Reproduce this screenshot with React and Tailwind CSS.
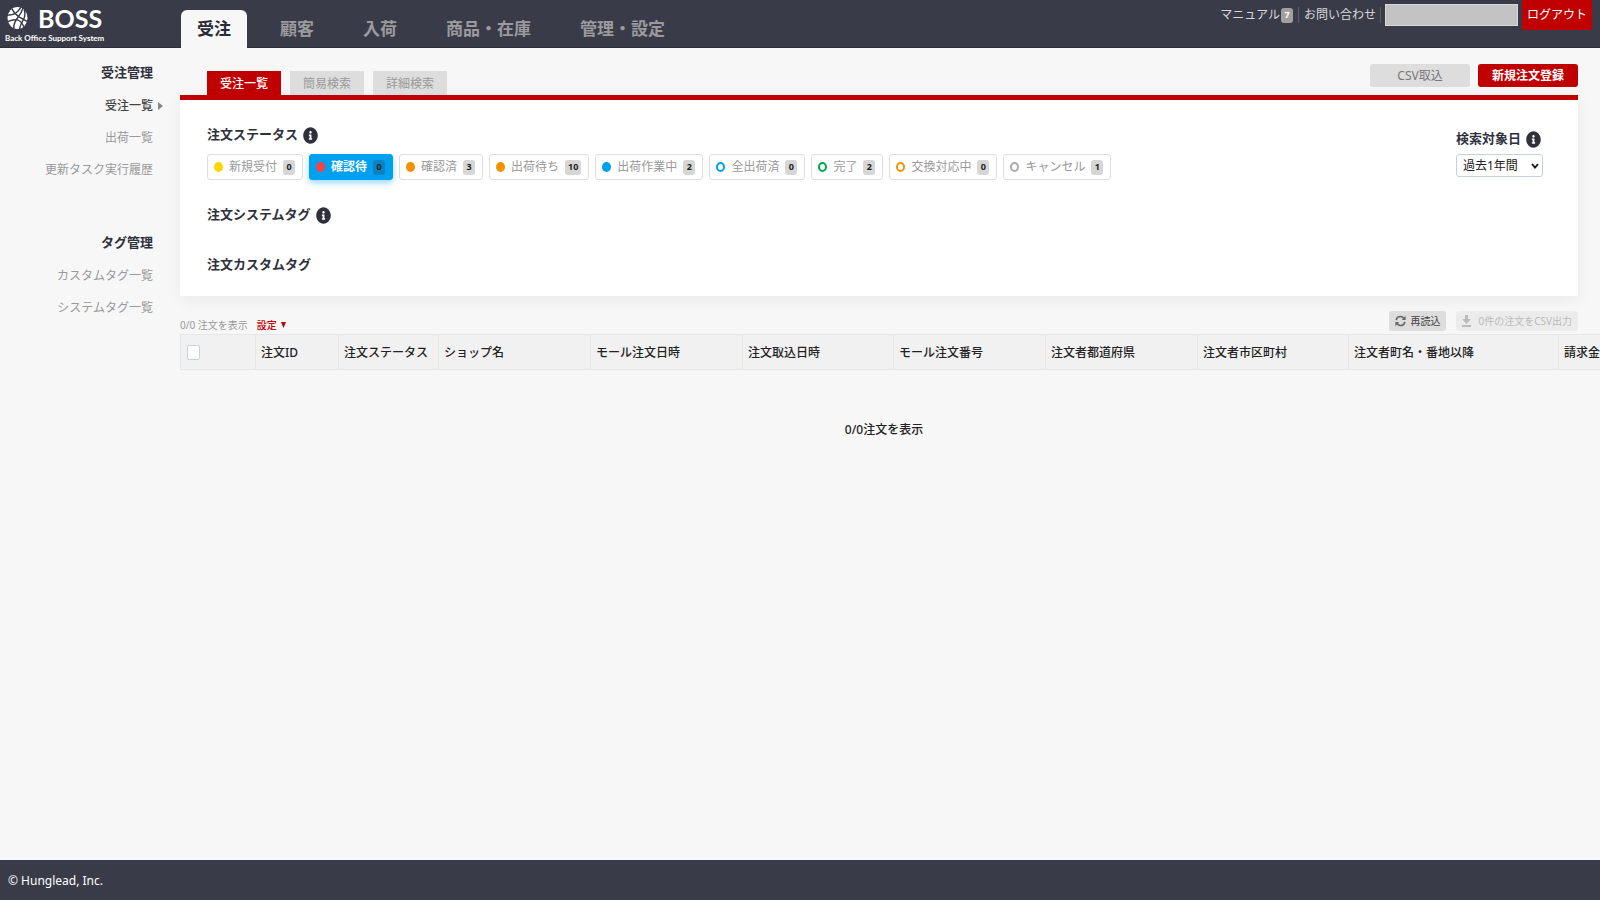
import clsx from "clsx";
import { FaInfoCircle } from "react-icons/fa";

const navItems = ["受注", "顧客", "入荷", "商品・在庫", "管理・設定"];

const sideMenus = [
  { title: "受注管理", items: ["受注一覧", "出荷一覧", "更新タスク実行履歴"] },
  { title: "タグ管理", items: ["カスタムタグ一覧", "システムタグ一覧"] },
];

const tabs = ["受注一覧", "簡易検索", "詳細検索"];

const statuses = [
  { label: "新規受付", count: 0, dot: "bg-[#ffd500]" },
  { label: "確認待", count: 0, dot: "bg-[#ff4040]", active: true },
  { label: "確認済", count: 3, dot: "bg-[#f59000]" },
  { label: "出荷待ち", count: 10, dot: "bg-[#f59000]" },
  { label: "出荷作業中", count: 2, dot: "bg-[#00a0f0]" },
  { label: "全出荷済", count: 0, dot: "border-2 border-[#00a0f0]" },
  { label: "完了", count: 2, dot: "border-2 border-[#00a84a]" },
  { label: "交換対応中", count: 0, dot: "border-2 border-[#f59000]" },
  { label: "キャンセル", count: 1, dot: "border-2 border-[#aaaaaa]" },
];

const columns = [
  { label: "注文ID", width: "w-[83px]" },
  { label: "注文ステータス", width: "w-[100px]" },
  { label: "ショップ名", width: "w-[152px]" },
  { label: "モール注文日時", width: "w-[152px]" },
  { label: "注文取込日時", width: "w-[151px]" },
  { label: "モール注文番号", width: "w-[152px]" },
  { label: "注文者都道府県", width: "w-[152px]" },
  { label: "注文者市区町村", width: "w-[151px]" },
  { label: "注文者町名・番地以降", width: "w-[210px]" },
  { label: "請求金", width: "w-[100px]" },
];

function Logo() {
  return (
    <a href="#" className="block w-[180px] pl-[5px] pt-1 text-white font-['Lato','Noto_Sans',sans-serif]">
      <span className="flex h-7 items-center gap-2.5">
        <svg viewBox="0 0 22 24" className="ml-0.5 h-6 w-[21px]" aria-hidden="true">
          <ellipse cx="11" cy="12" rx="10.5" ry="11.5" fill="#fff" />
          <g fill="none" stroke="#393c48" strokeWidth="1.5">
            <path d="M5 2 Q8 8 13 11 T22 16" />
            <path d="M17 1 Q15 7 11 12 T7 23" />
            <path d="M0 9 Q6 9 9 7 T15 0" />
            <path d="M0 16 Q7 13 11 14 T18 22" />
            <path d="M18 3 Q20 9 17 14 T13 24" />
          </g>
        </svg>
        <span className="text-[25px] leading-7 font-bold">BOSS</span>
      </span>
      <span className="block text-[8px] leading-3 font-bold whitespace-nowrap">Back Office Support System</span>
    </a>
  );
}

function Header() {
  return (
    <header className="flex h-12 border-b border-[#2c2d3a] bg-[#393c48]">
      <Logo />
      <nav className="ml-px flex gap-[17px] pt-2.5">
        {navItems.map((item, i) => (
          <a
            key={item}
            href="#"
            className={clsx(
              "flex h-[38px] items-center px-4 text-[17px] font-bold",
              i === 0 ? "rounded-t-md bg-[#f7f7f7] text-[#2b2c38]" : "text-[#9a9a9f]"
            )}
          >
            {item}
          </a>
        ))}
      </nav>
      <div className="ml-auto flex h-[30px] items-center pr-2 text-xs text-[#d8d8dc]">
        <a href="#" className="flex items-center gap-px">
          マニュアル
          <span className="flex h-[15px] w-3 items-center justify-center rounded-[3px] bg-[#a0a0a0] text-[9px] font-bold text-white">7</span>
        </a>
        <span className="mx-[5px] h-4 w-px bg-[#5c5d68]" />
        <a href="#">お問い合わせ</a>
        <span className="mx-1 h-4 w-px bg-[#5c5d68]" />
        <span className="h-[22px] w-[133px] border border-[#d8d8d8] bg-[#c3c3c3]" />
        <button className="ml-1 h-[30px] w-[70px] bg-[#c00000] text-white">ログアウト</button>
      </div>
    </header>
  );
}

function Sidebar() {
  return (
    <aside className="w-[180px] shrink-0 pt-2 pr-[27px] text-right">
      {sideMenus.map((menu, i) => (
        <section key={menu.title} className="mb-10">
          <h2 className="text-[13px] leading-8 font-bold text-[#2f303c]">{menu.title}</h2>
          <ul className="mt-0.5">
            {menu.items.map((item, j) => (
              <li key={item} className="relative text-xs leading-8">
                <a href="#" className={i === 0 && j === 0 ? "font-medium text-[#444]" : "text-[#999]"}>
                  {item}
                </a>
                {i === 0 && j === 0 && (
                  <svg viewBox="0 0 5 8" className="absolute top-3 -right-2.5 h-2 w-[5px]" aria-hidden="true">
                    <path d="M0 0 L5 4 L0 8 Z" fill="#888" />
                  </svg>
                )}
              </li>
            ))}
          </ul>
        </section>
      ))}
    </aside>
  );
}

function SectionTitle({ children, info }) {
  return (
    <h3 className="flex h-5 items-center gap-[5px] text-[13px] font-bold text-[#2f303c]">
      {children}
      {info && <FaInfoCircle className="h-[17px] w-[15px]" preserveAspectRatio="none" />}
    </h3>
  );
}

function StatusChip({ label, count, dot, active }) {
  return (
    <button
      className={clsx(
        "flex h-[26px] items-center rounded-[3px] border pr-[7px] pl-1.5 text-xs",
        active
          ? "border-[#00a0f0] bg-[#00a0f0] font-bold text-white shadow-[0_3px_6px_rgba(0,160,240,0.4)]"
          : "border-[#dddddd] bg-white text-[#999]"
      )}
    >
      <span className={clsx("h-2.5 w-[9px] rounded-[50%]", dot)} />
      <span className="ml-1.5">{label}</span>
      <span
        className={clsx(
          "ml-1.5 flex h-[15px] min-w-3 items-center justify-center rounded-[3px] px-[3px] text-[9px] font-bold text-[#222]",
          active ? "bg-[#0c83c0]" : "bg-[#d6d6d6]"
        )}
      >
        {count}
      </span>
    </button>
  );
}

function SearchPanel() {
  return (
    <section className="flex justify-between border-t-[5px] border-[#c00000] bg-white pt-[25px] pr-[35px] pb-5 pl-[27px] shadow-[0_4px_16px_rgba(0,0,0,0.06)]">
      <div>
        <SectionTitle info>注文ステータス</SectionTitle>
        <div className="mt-[9px] flex gap-1.5">
          {statuses.map((status) => (
            <StatusChip key={status.label} {...status} />
          ))}
        </div>
        <div className="mt-[25px]">
          <SectionTitle info>注文システムタグ</SectionTitle>
        </div>
        <div className="mt-[30px] pb-px">
          <SectionTitle>注文カスタムタグ</SectionTitle>
        </div>
      </div>
      <div className="pt-1">
        <label htmlFor="period">
          <SectionTitle info>検索対象日</SectionTitle>
        </label>
        <div className="relative mt-[5px]">
          <select id="period" className="block h-[23px] w-[87px] appearance-none rounded-[3px] border border-[#c5d2de] bg-white pl-1.5 text-xs text-[#222]">
            <option>過去1年間</option>
          </select>
          <svg viewBox="0 0 8 6" className="pointer-events-none absolute top-[9px] right-1 h-1.5 w-2" aria-hidden="true">
            <path d="M1 1 L4 4.5 L7 1" fill="none" stroke="#111" strokeWidth="1.8" />
          </svg>
        </div>
      </div>
    </section>
  );
}

function OrderList() {
  return (
    <section className="mt-[15px]">
      <div className="mr-[22px] flex h-[23px] items-start justify-between text-[10px]">
        <div className="flex h-7 items-center gap-[9px]">
          <span className="text-[#999]">0/0 注文を表示</span>
          <button className="flex items-center gap-1 font-medium text-[#c00000]">
            設定
            <svg viewBox="0 0 5 6" className="h-1.5 w-[5px]" aria-hidden="true">
              <path d="M0 0 H5 L2.5 6 Z" fill="#c00000" />
            </svg>
          </button>
        </div>
        <div className="flex gap-2.5">
          <button className="flex h-5 items-center gap-1 rounded-[3px] bg-[#dddddd] px-1.5 text-[#444]">
            <svg viewBox="0 0 11 12" className="h-3 w-[11px]" aria-hidden="true">
              <path d="M1.2 5.2 Q1.8 1.5 5.5 1.5 Q7.6 1.5 9 3.4 M9.8 6.8 Q9.2 10.5 5.5 10.5 Q3.4 10.5 2 8.6" fill="none" stroke="#666" strokeWidth="1.7" />
              <path d="M10.6 0.8 V5 H6.8 Z M0.4 11.2 V7 H4.2 Z" fill="#666" />
            </svg>
            再読込
          </button>
          <button className="flex h-5 items-center gap-[7px] rounded-[3px] bg-[#ececec] px-1.5 text-[#bbb]" disabled>
            <svg viewBox="0 0 9 12" className="h-3 w-[9px]" fill="#bbb" aria-hidden="true">
              <path d="M3 0 H6 V4 H9 L4.5 9 L0 4 H3 Z M0 10 H9 V12 H0 Z" />
            </svg>
            0件の注文をCSV出力
          </button>
        </div>
      </div>
      <div className="overflow-hidden">
        <table className="w-[1478px] table-fixed border-collapse text-left text-xs text-[#222]">
          <thead>
            <tr className="h-[35px] bg-[#f1f1f1]">
              <th className="w-[75px] border border-[#e6e6e6] px-1.5">
                <input
                  type="checkbox"
                  aria-label="すべて選択"
                  className="block h-[15px] w-[13px] appearance-none rounded-[2px] border border-[#c5d2de] bg-white"
                />
              </th>
              {columns.map((col) => (
                <th key={col.label} className={clsx("border border-[#e6e6e6] px-[5px] pt-px font-medium whitespace-nowrap", col.width)}>
                  {col.label}
                </th>
              ))}
            </tr>
          </thead>
        </table>
      </div>
      <p className="mt-[50px] pr-3 text-center text-xs leading-5 font-medium text-[#222]">0/0注文を表示</p>
    </section>
  );
}

export default function App() {
  return (
    <div className="flex min-h-screen flex-col bg-[#f7f7f7] font-['Noto_Sans','Noto_Sans_CJK_JP',sans-serif]">
      <Header />
      <div className="flex flex-1">
        <Sidebar />
        <main className="min-w-0 flex-1 pt-4">
          <div className="mr-[22px]">
            <div className="flex h-[31px] items-start justify-between pl-[27px]">
              <div className="flex gap-[9px] self-end text-xs">
                {tabs.map((tab, i) => (
                  <button
                    key={tab}
                    className={clsx("h-6 w-[74px] pt-0.5", i === 0 ? "bg-[#c00000] font-medium text-white" : "bg-[#dddddd] text-[#999]")}
                  >
                    {tab}
                  </button>
                ))}
              </div>
              <div className="flex gap-2 text-xs">
                <button className="h-[23px] w-[100px] rounded-[3px] bg-[#dddddd] text-[#777]">CSV取込</button>
                <button className="h-[23px] w-[100px] rounded-[3px] bg-[#c00000] font-bold text-white">新規注文登録</button>
              </div>
            </div>
            <SearchPanel />
          </div>
          <OrderList />
        </main>
      </div>
      <footer className="flex h-10 items-center bg-[#393c48] pt-0.5 pl-2 text-xs text-white">© Hunglead, Inc.</footer>
    </div>
  );
}
